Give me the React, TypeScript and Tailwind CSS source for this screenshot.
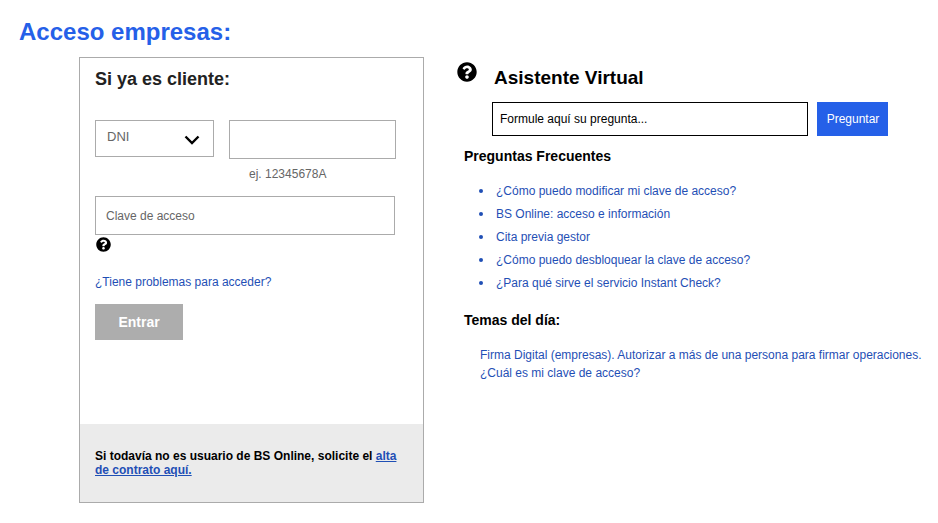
import React from "react";
import { FaQuestionCircle } from "react-icons/fa";

const faqs = [
  "¿Cómo puedo modificar mi clave de acceso?",
  "BS Online: acceso e información",
  "Cita previa gestor",
  "¿Cómo puedo desbloquear la clave de acceso?",
  "¿Para qué sirve el servicio Instant Check?",
];

export default function App() {
  return (
    <div className="h-[523px] w-[938px] overflow-hidden bg-white font-['Liberation_Sans',Arial,sans-serif]">
      <h1 className="pl-[19px] pt-[18px] text-[24px] font-bold leading-[28px] text-[#2560e8]">
        Acceso empresas:
      </h1>

      <div className="mt-[11px] flex pl-[79px]">
        {/* Login card */}
        <div className="flex h-[446px] w-[345px] flex-col border border-[#ababab]">
          <div className="flex-1 pl-[15px]">
            <h2 className="mt-[11px] text-[18px] font-bold leading-[21px] text-[#222]">
              Si ya es cliente:
            </h2>

            <div className="mt-[30px] flex gap-[15px]">
              <div className="flex h-[37px] w-[119px] items-start justify-between border border-[#ababab] pl-[11px] pr-[13px]">
                <span className="mt-[8px] text-[13px] leading-[15px] text-[#666]">DNI</span>
                <svg viewBox="0 0 16 10" className="mt-[14px] h-[10px] w-[16px]">
                  <path d="M1.5 1.5 8 8l6.5-6.5" fill="none" stroke="#000" strokeWidth="2.4" />
                </svg>
              </div>
              <div>
                <div className="h-[39px] w-[167px] border border-[#ababab]" />
                <p className="mt-[8px] pl-[20px] text-[12px] leading-[14px] text-[#666]">
                  ej. 12345678A
                </p>
              </div>
            </div>

            <div className="mt-[15px] flex h-[39px] w-[300px] items-center border border-[#ababab] pl-[10px] text-[12px] text-[#666]">
              Clave de acceso
            </div>
            <FaQuestionCircle className="mt-[2px] ml-px h-[15px] w-[15px] text-black" />

            <a className="mt-[23px] block text-[12px] leading-[14px] text-[#1f4fb5]">
              ¿Tiene problemas para acceder?
            </a>

            <button className="mt-[15px] block h-[36px] w-[88px] bg-[#adadad] text-[14px] font-bold text-white">
              Entrar
            </button>
          </div>

          <div className="h-[78px] bg-[#ebebeb] pl-[15px] pt-[25px] text-[12px] font-bold leading-[14px] text-black">
            <p className="whitespace-nowrap">
              Si todavía no es usuario de BS Online, solicite el{" "}
              <a className="text-[#1f4fb5] underline">alta</a>
            </p>
            <a className="block text-[#1f4fb5] underline">de contrato aquí.</a>
          </div>
        </div>

        {/* Virtual assistant */}
        <div className="ml-[33px] flex-1">
          <div className="flex items-start">
            <FaQuestionCircle className="mt-[5px] h-[20px] w-[20px] text-black" />
            <h2 className="ml-[17px] mt-[10px] text-[19px] font-bold leading-[21px] text-black">
              Asistente Virtual
            </h2>
          </div>

          <div className="ml-[35px] mt-[14px] flex gap-[9px]">
            <div className="flex h-[34px] w-[316px] items-center border border-black pl-[7px] text-[12px] text-black">
              Formule aquí su pregunta...
            </div>
            <button className="h-[34px] w-[71px] bg-[#2560e8] pl-px text-[12px] text-white">
              Preguntar
            </button>
          </div>

          <h3 className="ml-[7px] mt-[12px] text-[14px] font-bold leading-[16px] text-black">
            Preguntas Frecuentes
          </h3>

          <ul className="ml-[22px] mt-[20px] text-[12px] leading-[14px] text-[#1f4fb5]">
            {faqs.map((faq) => (
              <li key={faq} className="mb-[9px] flex items-center gap-[13px]">
                <span className="h-[4px] w-[4px] rounded-full bg-[#1f4fb5]" />
                {faq}
              </li>
            ))}
          </ul>

          <h3 className="ml-[7px] mt-[22px] text-[14px] font-bold leading-[16px] text-black">
            Temas del día:
          </h3>

          <div className="ml-[23px] mt-[18px] whitespace-nowrap text-[12px] leading-[18px] text-[#1f4fb5]">
            <a className="block">Firma Digital (empresas). Autorizar a más de una persona para firmar operaciones.</a>
            <a className="block">¿Cuál es mi clave de acceso?</a>
          </div>
        </div>
      </div>
    </div>
  );
}
